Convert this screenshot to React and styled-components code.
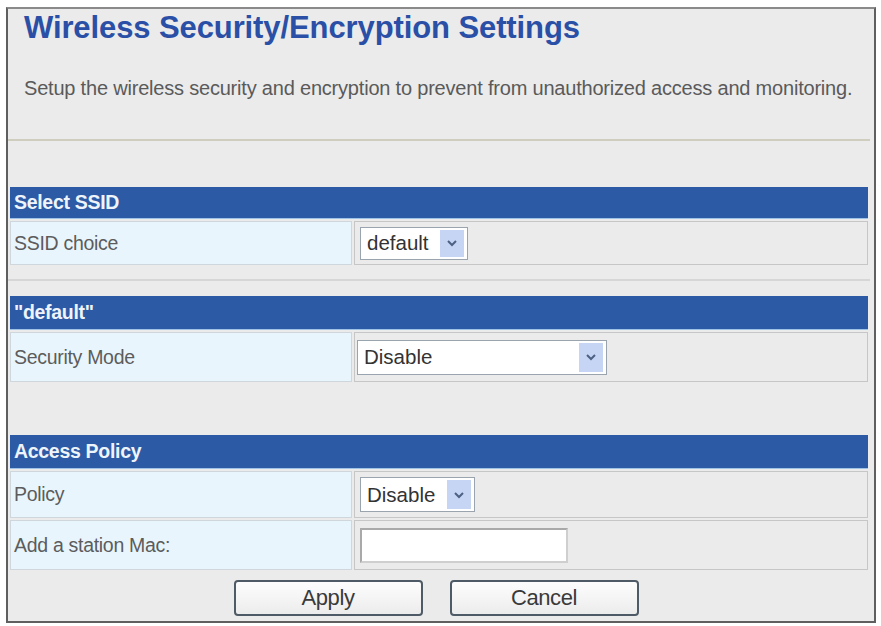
import React from 'react'
import styled, { createGlobalStyle } from 'styled-components'

const GlobalStyle = createGlobalStyle`
	html, body {
		margin: 0;
		padding: 0;
		background: #ffffff;
		font-family: "Liberation Sans", Arial, sans-serif;
	}
`

const Frame = styled.div`
	box-sizing: border-box;
	margin: 7px 5px 0 6px;
	width: 870px;
	height: 616px;
	border: 2px solid #5f5f5f;
	border-top-color: #8a8a8a;
	background: #ebebeb;
	display: flex;
	flex-direction: column;
	padding: 0 6px 0 2px;
`

const Title = styled.h1`
	margin: 2px 0 0 14px;
	font-size: 31px;
	line-height: 34px;
	font-weight: bold;
	color: #2a4fa6;
	letter-spacing: -0.1px;
	white-space: nowrap;
`

const Intro = styled.p`
	margin: 32px 0 0 14px;
	font-size: 20px;
	line-height: 22px;
	color: #5a5a5a;
	letter-spacing: -0.2px;
	white-space: nowrap;
`

const Rule = styled.hr`
	margin: ${p => p.$top}px -2px 0 -2px;
	border: 0;
	height: 2px;
	flex-shrink: 0;
	background: ${p => p.$color || '#cfcdbd'};
`

const Section = styled.section`
	margin-top: ${p => p.$top}px;
	display: flex;
	flex-direction: column;
	gap: 2px;
`

const Bar = styled.div`
	box-sizing: border-box;
	height: ${p => p.$h || 32}px;
	background: #2c5aa5;
	border-bottom: 1px solid #9fc3e6;
	color: #eef4fb;
	font-weight: bold;
	font-size: 19.5px;
	display: flex;
	align-items: center;
	padding-left: 4px;
	letter-spacing: -0.3px;
`

const Row = styled.div`
	display: grid;
	grid-template-columns: 342px 1fr;
	gap: 2px;
	height: ${p => p.$h}px;
`

const Label = styled.div`
	background: #e9f5fc;
	border: 1px solid #cfd6dc;
	display: flex;
	align-items: center;
	padding-left: 3px;
	font-size: 19.5px;
	color: #5c5c5c;
	letter-spacing: -0.3px;
`

const Value = styled.div`
	background: #ebebeb;
	border: 1px solid #c6c6c6;
	display: flex;
	align-items: center;
	padding-left: ${p => p.$pad || 5}px;
`

const SelectBox = styled.div`
	box-sizing: border-box;
	width: ${p => p.$w}px;
	height: ${p => p.$h}px;
	background: #fff;
	border: 1px solid #9aa4ae;
	display: flex;
	align-items: center;
	justify-content: space-between;
	padding: 2px 3px 2px 6px;
	font-size: 20.5px;
	color: #333;
`

const Arrow = styled.span`
	width: 24px;
	align-self: stretch;
	background: #c5d5f3;
	display: flex;
	align-items: center;
	justify-content: center;
`

const TextInput = styled.input`
	box-sizing: border-box;
	width: 208px;
	height: 35px;
	border: 2px solid #a9a9a9;
	border-right-color: #cfcfcf;
	border-bottom-color: #cfcfcf;
	background: #fff;
	font-size: 18px;
	outline: none;
`

const Buttons = styled.div`
	display: flex;
	justify-content: center;
	gap: 27px;
	margin-top: 10px;
	padding-right: 6px;
`

const Button = styled.button`
	box-sizing: border-box;
	width: 189px;
	height: 36px;
	border: 2px solid #4e5a66;
	border-radius: 4px;
	background: linear-gradient(#fdfdfd, #ececec);
	font-family: "Liberation Sans", Arial, sans-serif;
	font-size: 22px;
	color: #3a3a3a;
	letter-spacing: -0.4px;
`

function Select({ value, width, height }) {
	return (
		<SelectBox $w={width} $h={height}>
			<span>{value}</span>
			<Arrow>
				<svg width="12" height="8" viewBox="0 0 12 8">
					<path d="M2 2 L6 6 L10 2" fill="none" stroke="#4d6185" strokeWidth="2" />
				</svg>
			</Arrow>
		</SelectBox>
	)
}

export default function App() {
	return (
		<>
			<GlobalStyle />
			<Frame>
				<Title>Wireless Security/Encryption Settings</Title>
				<Intro>
					Setup the wireless security and encryption to prevent from unauthorized access and monitoring.
				</Intro>
				<Rule $top={40} />

				<Section $top={46}>
					<Bar>Select SSID</Bar>
					<Row $h={44}>
						<Label>SSID choice</Label>
						<Value>
							<Select value="default" width={108} height={33} />
						</Value>
					</Row>
				</Section>
				<Rule $top={14} $color="#d6d6d6" />

				<Section $top={15}>
					<Bar $h={34}>"default"</Bar>
					<Row $h={50}>
						<Label>Security Mode</Label>
						<Value $pad={2}>
							<Select value="Disable" width={250} height={35} />
						</Value>
					</Row>
				</Section>

				<Section $top={53}>
					<Bar $h={34}>Access Policy</Bar>
					<Row $h={47}>
						<Label>Policy</Label>
						<Value>
							<Select value="Disable" width={115} height={35} />
						</Value>
					</Row>
					<Row $h={50}>
						<Label>Add a station Mac:</Label>
						<Value>
							<TextInput type="text" />
						</Value>
					</Row>
				</Section>

				<Buttons>
					<Button>Apply</Button>
					<Button>Cancel</Button>
				</Buttons>
			</Frame>
		</>
	)
}
